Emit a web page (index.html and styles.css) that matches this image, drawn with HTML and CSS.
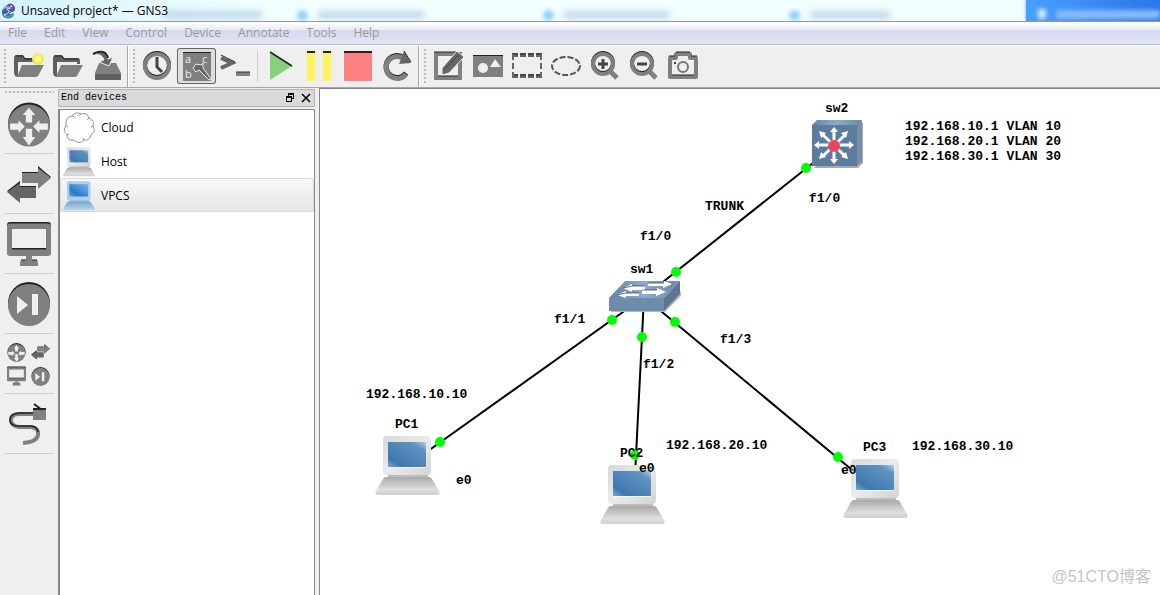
FILE: index.html
```html
<!DOCTYPE html>
<html lang="en">
<head>
<meta charset="utf-8">
<title>Unsaved project* — GNS3</title>
<link rel="stylesheet" href="styles.css">
</head>
<body>
<svg class="defs" aria-hidden="true">
  <defs>
    <linearGradient id="screen" x1="0" y1="1" x2="1" y2="0">
      <stop offset="0" stop-color="#7ba6cf"/><stop offset=".2" stop-color="#3f78af"/><stop offset=".8" stop-color="#5f92c1"/><stop offset="1" stop-color="#b5cfe6"/>
    </linearGradient>
    <linearGradient id="case" x1="0" y1="0" x2="1" y2="1">
      <stop offset="0" stop-color="#d8d8d8"/><stop offset=".5" stop-color="#ebebeb"/><stop offset="1" stop-color="#d2d2d2"/>
    </linearGradient>
    <linearGradient id="base" x1="0" y1="0" x2="0" y2="1">
      <stop offset="0" stop-color="#a9a9a9"/><stop offset=".7" stop-color="#dedede"/><stop offset="1" stop-color="#cfcfcf"/>
    </linearGradient>
    <linearGradient id="case-blue" x1="0" y1="0" x2="1" y2="1">
      <stop offset="0" stop-color="#a5cbee"/><stop offset="1" stop-color="#aed2f3"/>
    </linearGradient>
    <linearGradient id="base-blue" x1="0" y1="0" x2="0" y2="1">
      <stop offset="0" stop-color="#7fa4c5"/><stop offset="1" stop-color="#b4d7f6"/>
    </linearGradient>
    <linearGradient id="screen-blue" x1="0" y1="1" x2="1" y2="0">
      <stop offset="0" stop-color="#5b9fe0"/><stop offset=".3" stop-color="#2b78c4"/><stop offset="1" stop-color="#79b5ea"/>
    </linearGradient>
    <linearGradient id="steel" x1="0" y1="0" x2="1" y2="0">
      <stop offset="0" stop-color="#6384a8"/><stop offset=".5" stop-color="#90acca"/><stop offset="1" stop-color="#6887a8"/>
    </linearGradient>
    <symbol id="pc" viewBox="0 0 65 60">
      <path d="M13 38h40v4H13z" fill="#bdbdbd"/>
      <rect x="8" y="0" width="48" height="39" rx="4" fill="url(#case)"/>
      <rect x="13" y="6" width="38" height="26" fill="#f4f4f4"/>
      <rect x="13" y="6" width="38" height="25" fill="url(#screen)"/>
      <path d="M11 41h43q2 0 3 2l7 12q2 4-2 4H3q-4 0-2-4l7-12q1-2 3-2z" fill="url(#base)"/>
    </symbol>
    <symbol id="pc-blue" viewBox="0 0 65 60">
      <path d="M13 38h40v4H13z" fill="#8eb4d6"/>
      <rect x="8" y="0" width="48" height="39" rx="4" fill="url(#case-blue)"/>
      <rect x="13" y="6" width="38" height="25" fill="url(#screen-blue)"/>
      <path d="M11 41h43q2 0 3 2l7 12q2 4-2 4H3q-4 0-2-4l7-12q1-2 3-2z" fill="url(#base-blue)"/>
    </symbol>
    <symbol id="router" viewBox="0 0 42 42">
      <circle cx="21" cy="20" r="20" fill="#222"/>
      <circle cx="21" cy="22" r="20" fill="#808080"/>
      <path d="M21 5l6 7h-3v7h-6v-7h-3zM21 41l-6-8h3v-8h6v8h3zM17 23l-6 6v-3H3v-6h8v-3zM25 23l6-6v3h8v6h-8v3z" fill="#efefef"/>
    </symbol>
    <symbol id="switch" viewBox="0 0 44 38">
      <path d="M15 6h16V0l13 11-13 11v-5H15z" fill="#222"/>
      <path d="M15 7h16V2l13 10-13 11v-6H15z" fill="#808080"/>
      <path d="M29 20H13v-5L0 25l13 11v-5h16z" fill="#222"/>
      <path d="M29 21H13v-4L0 26l13 11v-5h16z" fill="#666"/>
    </symbol>
    <symbol id="monitor" viewBox="0 0 44 46">
      <rect x="0" y="1" width="44" height="33" rx="3" fill="#222"/>
      <path d="M3 2.500h38q3 0 3 3V32q0 3-3 3H3q-3 0-3-3V5.500q0-3 3-3z" fill="#808080"/>
      <path d="M5 8h34v20H5z" fill="#efefef"/><path d="M5 27h34v1.500H5z" fill="#222"/>
      <path d="M19 35h6v4h4q2 0 2 4v2H13v-2q0-4 2-4h4z" fill="#808080"/><path d="M14 39h5M25 39h5" stroke="#222"/>
    </symbol>
    <symbol id="skip" viewBox="0 0 44 44">
      <circle cx="22" cy="21" r="21" fill="#222"/><circle cx="22" cy="23" r="21" fill="#808080"/>
      <path d="M10 14l11 9-11 9zM25 12h6v21h-6z" fill="#efefef"/>
    </symbol>
    <symbol id="folder" viewBox="0 0 30 24">
      <path d="M0 3l2-2h7l2 3h14q2 0 2 3v3h-3V8H4v15l-3-1-1-3z" fill="#606060"/>
      <path d="M1 2h8l2 3h14" fill="none" stroke="#222"/>
      <path d="M8 11h22l-6 11q-1 1-3 1H3z" fill="#808080"/>
    </symbol>
  </defs>
</svg>

<div class="window">
  <header class="titlebar">
    <div class="glass" aria-hidden="true">
      <i class="smear smear-a"></i>
      <i class="orb"></i><i class="smear"></i>
      <i class="orb"></i><i class="smear"></i>
      <i class="orb"></i><i class="smear smear-short"></i>
      <div class="tab"><i class="glint"></i><i class="glint glint-long"></i></div>
    </div>
    <svg class="app-icon" viewBox="0 0 16 18" aria-hidden="true">
      <path d="M5 4q4-4 8-1 3 3 1 6-4 1-5 3 1 1 5 0-1 5-7 5-6-1-6-7 0-4 4-6z" fill="#3d6795"/><path d="M7 4q-1-3 3-3 5 1 5 6l-2 3-4-2z" fill="#6252a5"/>
      <path d="M5 16q6 2 9-4l-2-1-4 3z" fill="#329fc2"/><path d="M2 7q5-4 8-1l-4 1 3 2-2 3-4 1 3 2" fill="none" stroke="#d8ecf5"/><circle cx="11" cy="4" r="1" fill="#fff"/>
    </svg>
    <h1 class="title">Unsaved project* — GNS3</h1>
  </header>

  <nav class="menubar">
    <button class="menu">File</button><button class="menu">Edit</button><button class="menu">View</button><button class="menu">Control</button><button class="menu">Device</button><button class="menu">Annotate</button><button class="menu">Tools</button><button class="menu">Help</button>
  </nav>

  <div class="toolbars">
    <div class="toolbar">
      <span class="grip"></span>
      <button class="tool" aria-label="New project"><svg viewBox="0 0 39 40"><use href="#folder" x="5" y="8" width="30" height="24"/><circle cx="29" cy="13" r="6" fill="#f3e95a"/><circle cx="29" cy="13" r="3" fill="#fbf6a0"/></svg></button>
      <button class="tool" aria-label="Open project"><svg viewBox="0 0 39 40"><use href="#folder" x="5" y="8" width="30" height="24"/></svg></button>
      <button class="tool" aria-label="Save project"><svg viewBox="0 0 39 40"><path d="M12 17h17l5 10v7H8v-7z" fill="#808080"/><path d="M8 28h26v6H8z" fill="#606060"/><path d="M6 9q12-7 15 4l5-2-4 9-10-4 5-2q-2-7-11-5z" fill="#666" stroke="#efefef"/><path d="M6 8q12-6 15 4" fill="none" stroke="#222" stroke-width="2"/></svg></button>
    </div>
    <div class="toolbar">
      <span class="grip"></span>
      <button class="tool" aria-label="Snapshots"><svg viewBox="0 0 39 40"><circle cx="19" cy="19" r="12" fill="none" stroke="#222" stroke-width="4"/><circle cx="19" cy="20" r="12" fill="none" stroke="#808080" stroke-width="4"/><path d="M19 11v10l5 5" fill="none" stroke="#444" stroke-width="3"/></svg></button>
      <button class="tool tool-on" aria-label="Show interface labels" aria-pressed="true"><svg viewBox="0 2 39 36"><path d="M6 6h28v29H6z" fill="#808080"/><path d="M6 6h28v1H6z" fill="#222"/><g class="glyph"><text x="8" y="17">a</text><text x="25" y="17">c</text><text x="8" y="32">b</text></g><path d="M16 22l3-4 5 1 2-2v5l8 11-2 1-10-10-3 2z" fill="#666" stroke="#efefef"/></svg></button>
      <button class="tool" aria-label="Console"><svg viewBox="0 0 39 40"><path d="M5 12l11 5-11 5" fill="none" stroke="#666" stroke-width="4"/><path d="M5 9l14 7" stroke="#222"/><path d="M20 26h14v4H20z" fill="#808080"/><path d="M20 26h14" stroke="#333"/></svg></button>
      <span class="rule"></span>
      <button class="tool" aria-label="Start"><svg viewBox="0 0 39 40"><path d="M9 6l22 14L9 34z" fill="#86d27c"/><path d="M9 6l22 14" stroke="#222" stroke-width="1.500"/></svg></button>
      <button class="tool" aria-label="Suspend"><svg viewBox="0 0 39 40"><path d="M7 6h8v29H7zM23 6h8v29h-8z" fill="#fff35c"/><path d="M7 6h8M23 6h8" stroke="#222" stroke-width="2"/></svg></button>
      <button class="tool" aria-label="Stop"><svg viewBox="0 0 39 40"><path d="M5 6h28v29H5z" fill="#ff8080"/><path d="M5 6h28" stroke="#222" stroke-width="2"/></svg></button>
      <button class="tool" aria-label="Reload"><svg viewBox="0 0 39 40"><path d="M26 12a11 11 0 1 0 2 15" fill="none" stroke="#222" stroke-width="5"/><path d="M26 13a11 11 0 1 0 2 15" fill="none" stroke="#808080" stroke-width="5"/><path d="M26 5l7 12-12 1z" fill="#666"/><path d="M26 5l7 11" stroke="#222"/></svg></button>
    </div>
    <div class="toolbar toolbar-last">
      <span class="grip"></span>
      <button class="tool" aria-label="Add a note"><svg viewBox="0 0 39 40"><rect x="7" y="8" width="24" height="24" fill="none" stroke="#808080" stroke-width="4"/><path d="M5 6h24M9 30h20" stroke="#222"/><path d="M13 22l15-17 7 6-15 16-7 2z" fill="#666" stroke="#efefef"/><path d="M16 23l13-14" stroke="#444"/></svg></button>
      <button class="tool" aria-label="Insert a picture"><svg viewBox="0 0 39 40"><path d="M5 9h30v22H5z" fill="#808080"/><path d="M5 9h30v1H5z" fill="#222"/><circle cx="15" cy="22" r="5" fill="#efefef"/><path d="M27 13l6 8H22z" fill="#efefef"/></svg></button>
      <button class="tool" aria-label="Draw a rectangle"><svg viewBox="0 0 39 40"><path d="M5 9h30M5 30h30" stroke="#666" stroke-width="4" stroke-dasharray="6 2"/><path d="M5 8h30M5 29h30" stroke="#222" stroke-dasharray="6 2"/><path d="M6 8v22M34 8v22" stroke="#666" stroke-width="2" stroke-dasharray="6 3"/></svg></button>
      <button class="tool" aria-label="Draw an ellipse"><svg viewBox="0 0 39 40"><ellipse cx="20" cy="20" rx="14" ry="9" fill="none" stroke="#555" stroke-width="2" stroke-dasharray="6 2"/></svg></button>
      <button class="tool" aria-label="Zoom in"><svg viewBox="0 0 39 40"><path d="M25 25l7 7" stroke="#808080" stroke-width="5"/><circle cx="18" cy="17" r="10" fill="none" stroke="#222" stroke-width="4"/><circle cx="18" cy="18" r="10" fill="none" stroke="#808080" stroke-width="4"/><path d="M13 18h10M18 13v10" stroke="#444" stroke-width="3"/></svg></button>
      <button class="tool" aria-label="Zoom out"><svg viewBox="0 0 39 40"><path d="M25 25l7 7" stroke="#808080" stroke-width="5"/><circle cx="18" cy="17" r="10" fill="none" stroke="#222" stroke-width="4"/><circle cx="18" cy="18" r="10" fill="none" stroke="#808080" stroke-width="4"/><path d="M13 18h10" stroke="#444" stroke-width="3"/></svg></button>
      <button class="tool" aria-label="Screenshot"><svg viewBox="0 0 39 40"><path d="M7 12h6V8h14v4h6v19H7z" fill="none" stroke="#808080" stroke-width="4" stroke-linejoin="round"/><path d="M13 6h14M6 10h6M28 10h6M9 29h22" stroke="#222"/><circle cx="20" cy="21" r="5" fill="none" stroke="#777" stroke-width="2"/><path d="M11 16h2v2h-2z" fill="#444"/></svg></button>
    </div>
  </div>

  <main class="workspace">
    <aside class="devices">
      <span class="grip grip-across"></span>
      <button class="category" aria-label="Routers"><svg viewBox="0 0 49 59"><use href="#router" x="2" y="8" width="44" height="45"/></svg></button>
      <button class="category" aria-label="Switches"><svg viewBox="0 0 49 59"><use href="#switch" x="2" y="12" width="44" height="38"/></svg></button>
      <button class="category" aria-label="End devices"><svg viewBox="0 0 49 59"><use href="#monitor" x="2" y="7" width="44" height="46"/></svg></button>
      <button class="category" aria-label="Security devices"><svg viewBox="0 0 49 59"><use href="#skip" x="2" y="8" width="44" height="44"/></svg></button>
      <button class="category" aria-label="All devices"><svg viewBox="0 0 49 59"><use href="#router" x="2" y="9" width="19" height="19"/><use href="#switch" x="25" y="10" width="21" height="16"/><use href="#monitor" x="2" y="32" width="19" height="20"/><use href="#skip" x="26" y="33" width="19" height="19"/></svg></button>
      <button class="category" aria-label="Add a link"><svg viewBox="0 0 49 59"><g fill="none" stroke-width="4"><path d="M31 20H14Q6 20 6 26T14 33H26Q34 34 33 41T18 49" stroke="#808080"/><path d="M31 19H14Q5 20 5 26T14 32H26Q33 33 33 38" stroke="#222" stroke-width="1.500"/></g><path d="M28 15h13v11H28z" fill="#808080"/><path d="M28 15h13M29 10l8 6" stroke="#222" stroke-width="2"/></svg></button>
    </aside>

    <section class="dock">
      <div class="dock-head">
        <h2 class="dock-title">End devices</h2>
        <button class="dock-button" aria-label="Float"><svg viewBox="0 0 10 10" shape-rendering="crispEdges"><path d="M3 0h6v2H3zM8 2h1v4H7V5h1zM3 2h1v1H3zM1 3h6v2H1zM1 5h1v4H1zM6 5h1v4H6zM2 8h4v1H2z"/></svg></button>
        <button class="dock-button" aria-label="Close"><svg viewBox="0 0 10 10"><path d="M1 1l8 8M9 1L1 9" stroke="#000" stroke-width="1.500"/></svg></button>
      </div>
      <ul class="list">
        <li class="item"><svg class="item-icon" viewBox="0 0 32 32"><path d="M9 4Q13-1 18 2Q24 0 26 6Q32 9 30 14Q33 20 28 23Q27 29 21 28Q16 33 11 28Q4 29 4 23Q-1 18 3 14Q2 5 9 4z" fill="#fff" stroke="#7d9da0"/><path d="M9 4q2 0 3 2M18 2q-2 1-2 2M26 6l-2 2M30 14l-2 1M21 28l-1-2M4 23l2-1M3 14l2 1" fill="none" stroke="#7d9da0"/></svg>Cloud</li>
        <li class="item"><svg class="item-icon" viewBox="0 0 32 32"><use href="#pc" width="32" height="32"/></svg>Host</li>
        <li class="item item-selected"><svg class="item-icon" viewBox="0 0 32 32"><use href="#pc-blue" width="32" height="32"/></svg>VPCS</li>
      </ul>
    </section>

    <section class="canvas">
      <svg class="topology" viewBox="320 89 840 506" preserveAspectRatio="xMinYMin slice" role="img" aria-label="Network topology">
        <g stroke="#000" stroke-width="2">
          <path d="M837 144L644 297M407 466L644 297M634 495L644 297M875 489L644 297"/>
        </g>
        <g>
          <path d="M611 312h54l16-16v-5l-18 18-52 2z" fill="#b8b8b8"/>
          <path d="M609 298l16-17h55l-16 17z" fill="url(#steel)"/>
          <path d="M664 298l16-17v13l-16 17z" fill="#5c7590"/>
          <path d="M609 298h55v13h-55z" fill="#6e8dad"/>
          <path d="M648 283h16v-2l8 3-9 4v-2h-15zM645 286h-13v-2l-9 4 9 4v-2h13zM642 290h15v-2l9 4-10 4v-2h-14zM639 293h-13v-2l-9 4 9 3v-2h13z" fill="#fff"/>
          <path d="M648 283h16M645 286h-13l-9 2M642 290h15M639 293h-13l-9 2" fill="none" stroke="#333" stroke-width=".7"/>
        </g>
        <g>
          <path d="M814 168h44l5-5v-40l-4-2" fill="#aaa"/>
          <path d="M812 125l5-5h45l-5 5z" fill="url(#steel)"/>
          <path d="M857 125l5-5v41l-5 5z" fill="#748da8"/>
          <path d="M812 125h45v41h-45z" fill="#5d7c9d"/>
          <g stroke="#fff" stroke-width="3" fill="#fff">
            <path d="M834 131v30M818 145h32M823 135l22 21M845 135l-22 21"/>
            <path stroke="none" d="M834 127l4 5h-8zM834 164l-4-5h8zM814 145l5-4v8zM854 145l-5-4v8zM819 131l7 2-5 5zM848 131l-7 2 5 5zM819 159l7-2-5-5zM848 159l-7-2 5-5z"/>
          </g>
          <circle cx="834" cy="146" r="6" fill="#e84660"/>
        </g>
        <use href="#pc" x="375" y="436" width="65" height="60"/>
        <use href="#pc" x="600" y="465" width="65" height="60"/>
        <use href="#pc" x="843" y="459" width="65" height="60"/>
        <g fill="#0f0">
          <circle cx="806" cy="168" r="5"/><circle cx="676" cy="272" r="5"/><circle cx="612" cy="320" r="5"/><circle cx="642" cy="337" r="5"/><circle cx="675" cy="322" r="5"/><circle cx="440" cy="442" r="5"/><circle cx="635" cy="455" r="5"/><circle cx="838" cy="457" r="5"/>
        </g>
        <g class="label">
          <text x="825" y="112">sw2</text>
          <text x="905" y="130">192.168.10.1 VLAN 10</text>
          <text x="905" y="145">192.168.20.1 VLAN 20</text>
          <text x="905" y="160">192.168.30.1 VLAN 30</text>
          <text x="809" y="202">f1/0</text>
          <text x="705" y="210">TRUNK</text>
          <text x="640" y="240">f1/0</text>
          <text x="630" y="273">sw1</text>
          <text x="554" y="323">f1/1</text>
          <text x="643" y="368">f1/2</text>
          <text x="720" y="343">f1/3</text>
          <text x="366" y="398">192.168.10.10</text>
          <text x="395" y="428">PC1</text>
          <text x="456" y="484">e0</text>
          <text x="620" y="457">PC2</text>
          <text x="639" y="472">e0</text>
          <text x="666" y="449">192.168.20.10</text>
          <text x="863" y="451">PC3</text>
          <text x="841" y="474">e0</text>
          <text x="912" y="450">192.168.30.10</text>
        </g>
      </svg>
      <span class="watermark">@51CTO博客</span>
    </section>
  </main>
</div>
</body>
</html>
```
FILE: styles.css
```css
* { box-sizing: border-box; }

body {
  margin: 0;
  background: #efefef;
  color: #000;
  font: 12px/16px "Open Sans", "Noto Sans", sans-serif;
}

button {
  margin: 0;
  padding: 0;
  border: 0;
  background: none;
  color: inherit;
  font: inherit;
}

svg { display: block; }
.defs { position: absolute; width: 0; height: 0; }

.window {
  display: flex;
  flex-direction: column;
  height: 100vh;
  overflow: hidden;
}

/* Title bar */
.titlebar {
  position: relative;
  display: flex;
  align-items: center;
  gap: 5px;
  height: 22px;
  padding-left: 1px;
  border-bottom: 1px solid #8f999d;
  background: linear-gradient(90deg, #d5f3fa, #f2ffff 280px);
  overflow: hidden;
}
.app-icon { position: relative; width: 15px; height: 18px; }
.title { position: relative; margin: 0; font-size: 12px; font-weight: 400; line-height: 20px; }

.glass {
  position: absolute;
  inset: 0;
  display: flex;
  align-items: center;
  padding-top: 9px;
}
.smear { width: 106px; height: 8px; margin: 0 119px 0 10px; background: #c3d8ea; filter: blur(3px); }
.smear-a { width: 100px; margin: 0 35px 0 162px; }
.smear-short { width: 80px; margin-right: 0; }
.orb { flex: none; width: 11px; height: 11px; border-radius: 50%; background: #94d2fa; filter: blur(2px); }
.tab {
  position: absolute;
  inset: 0 0 0 auto;
  display: flex;
  align-items: flex-end;
  gap: 10px;
  width: 134px;
  padding: 0 0 2px 12px;
  background: linear-gradient(90deg, #49a0ff, #2b75ea);
  box-shadow: 0 0 3px #49a0ff;
}
.glint { width: 8px; height: 10px; background: #d2e7ff; filter: blur(2px); }
.glint-long { width: 104px; height: 9px; background: #86baf8; }

/* Menu bar */
.menubar {
  display: flex;
  gap: 17px;
  height: 23px;
  padding: 0 8px;
  border-bottom: 1px solid #b0b9d4;
  background: linear-gradient(#fff, #e8ebf3 8px, #d4daec 8px, #e1e6f5);
  color: #999;
}

/* Tool bars */
.toolbars {
  display: flex;
  height: 43px;
  border-top: 1px solid #fff;
  border-bottom: 1px solid #a6a6a6;
}
.toolbar { display: flex; padding: 0 1px 0 4px; border-right: 1px solid #a6a6a6; }
.toolbar + .toolbar { border-left: 1px solid #fff; }
.toolbar-last { flex: 1; border-right: 0; }
.grip {
  width: 2px;
  margin: 3px 3px 3px 0;
  background: repeating-linear-gradient(#bbb 0 2px, transparent 2px 4px);
}
.tool { width: 39px; height: 40px; }
.tool-on {
  height: 36px;
  margin-top: 2px;
  border-radius: 3px;
  background: #ddd;
  box-shadow: inset 0 0 0 1px #666;
}
.glyph { fill: #efefef; font: 11px "Open Sans", sans-serif; }
.rule { width: 1px; margin: 5px 3px 5px 2px; background: #ccc; }

/* Work area */
.workspace { display: flex; flex: 1; min-height: 0; }

.devices { width: 58px; padding: 3px 4px 0 5px; }
.grip-across {
  display: block;
  width: auto;
  height: 2px;
  margin: 0 0 1px;
  background: repeating-linear-gradient(90deg, #bbb 0 2px, transparent 2px 4px);
}
.category { display: block; width: 100%; height: 60px; border-bottom: 1px solid #ccc; }

.dock { display: flex; flex-direction: column; width: 257px; padding-top: 1px; }
.dock-head {
  display: flex;
  align-items: center;
  height: 18px;
  margin-bottom: 2px;
  padding: 0 3px 0 2px;
  border: 1px solid #b4b4b4;
  background: #dadada;
}
.dock-title { flex: 1; margin: 0; font: 10px/16px "Liberation Mono", monospace; }
.dock-button { width: 10px; height: 10px; margin-left: 6px; }
.list {
  flex: 1;
  margin: 0;
  padding: 0;
  border: 1px solid #828790;
  border-bottom: 0;
  border-left-width: 2px;
  background: #fff;
  list-style: none;
}
.item { display: flex; align-items: center; gap: 6px; height: 34px; padding: 2px 0 0 3px; }
.item-icon { width: 32px; height: 32px; }
.item-selected {
  border-radius: 3px;
  background: linear-gradient(#f8f8f8, #e5e5e5);
  box-shadow: inset 0 0 0 1px #d9d9d9;
}

.canvas {
  position: relative;
  flex: 1;
  min-width: 0;
  margin-left: 4px;
  border-top: 1px solid #828790;
  border-left: 1px solid #828790;
  background: #fff;
}
.topology { width: 100%; height: 100%; }
.label { font: bold 13px "Liberation Mono", monospace; }
.watermark {
  position: absolute;
  right: 9px;
  bottom: 8px;
  color: #c4c4c4;
  font: 16px/20px "Liberation Sans", "Noto Sans CJK SC", sans-serif;
}
```
